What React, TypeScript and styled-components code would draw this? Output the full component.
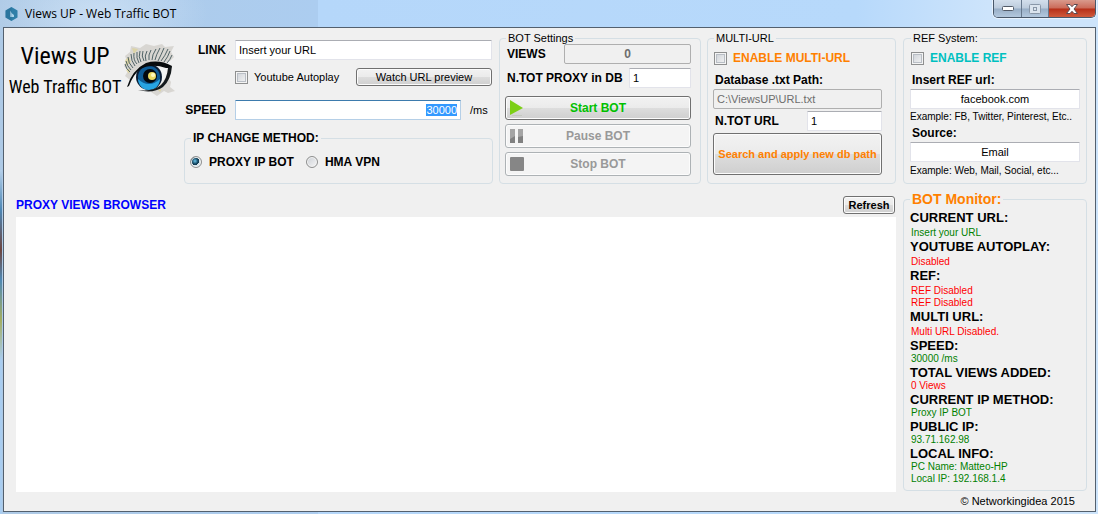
import React, { useEffect, useRef } from "react";
import styled, { createGlobalStyle, css } from "styled-components";

const Global = createGlobalStyle`
  *, *::before, *::after { box-sizing: border-box; }
  body {
    margin: 0;
    font: 11px/14px "Liberation Sans", Arial, sans-serif;
    color: #000;
    background: #b9d6f2;
  }
  button, input { font: inherit; color: inherit; }
`;

const bold = css`
  font-weight: 700;
  font-size: 12px;
`;

const Window = styled.div`
  display: flex;
  flex-direction: column;
  min-height: 100vh;
  padding: 0 2px 2px 3px;
  background:
    linear-gradient(#b5d0ea, #4d87b5 40px, #6d4640 80px, #5089b4 110px, #a3ae62 150px, #a9cdf0 190px) 0 170px / 2px 100% no-repeat,
    radial-gradient(ellipse at 98px 13px, #dcebfa99, #dcebfa00 110px),
    linear-gradient(90deg, #aecae6, #accdf0 29%, #b5d7fa 29%, #b7d9fb 78%, #cde4fb 90%);
`;

const TitleBar = styled.header`
  display: flex;
  justify-content: space-between;
  height: 27px;
`;

const Title = styled.h1`
  display: flex;
  align-items: center;
  gap: 7px;
  margin: 0;
  padding-left: 2px;
  font: 400 12px/24px "Open Sans", "Noto Sans", sans-serif;
`;

const WindowButtons = styled.div`
  display: flex;
  height: 18px;
  border: 1px solid #49586a;
  border-top: 0;
  border-radius: 0 0 5px 5px;
  overflow: hidden;
  box-shadow: 0 0 0 1px #ffffff88;
`;

const WindowButton = styled.button<{ $close?: boolean }>`
  display: grid;
  place-items: center;
  width: ${(p) => (p.$close ? 47 : 27)}px;
  padding: 0;
  border: 0;
  border-left: ${(p) => (p.$close ? "1px solid #4a2020" : "0")};
  background: ${(p) =>
    p.$close
      ? "linear-gradient(#d99a8c, #cb6a58 48%, #b62f18 52%, #cf5a3c)"
      : "linear-gradient(#d3dfec, #bccbdc 48%, #98aec6 52%, #b3c8de)"};
  & + & { border-left: 1px solid #66788d; }
`;

const Client = styled.main`
  display: flex;
  flex: 1;
  gap: 7px;
  padding: 4px 8px 0 4px;
  border: 1px solid #53606e;
  background: #f0f0f0;
`;

const MainColumn = styled.div`
  display: flex;
  flex: 1;
  flex-direction: column;
  min-width: 0;
`;

const Sidebar = styled.aside`
  display: flex;
  flex: 0 0 184px;
  flex-direction: column;
`;

const TopRow = styled.div`
  display: flex;
  gap: 6px;
  height: 152px;
`;

const Brand = styled.div`
  display: flex;
  flex: 0 0 170px;
  align-items: flex-start;
  justify-content: space-between;
  padding-top: 8px;
`;

const BrandText = styled.div`
  flex: 0 0 114px;
  font-family: "Liberation Sans Narrow", "Roboto Condensed", sans-serif;
  text-align: center;
  white-space: nowrap;
`;

const BrandName = styled.div`
  font-size: 24px;
  line-height: 32px;
`;

const BrandTagline = styled.div`
  font-size: 18px;
  line-height: 30px;
`;

const UrlForm = styled.div`
  display: flex;
  flex: 1;
  flex-direction: column;
  padding-top: 8px;
`;

const FormRow = styled.div<{ $gap: number }>`
  display: flex;
  align-items: center;
  min-height: 20px;
  margin-bottom: ${(p) => p.$gap}px;
  padding-right: 1px;
`;

const FormLabel = styled.label`
  ${bold}
  flex: 0 0 51px;
  padding-right: 9px;
  text-align: right;
`;

const Unit = styled.span`
  flex: 0 0 31px;
  padding-left: 9px;
`;

const Group = styled.fieldset<{ $width?: number; $right?: number }>`
  display: block;
  ${(p) => p.$width && `flex: 0 0 ${p.$width}px;`}
  min-width: 0;
  margin: 0;
  padding: 0 ${(p) => p.$right || 8}px 5px 5px;
  border: 1px solid #d5dfe5;
  border-radius: 4px;
`;

const Legend = styled.legend<{ $strong?: boolean }>`
  margin-left: 1px;
  padding: 0 2px;
  line-height: 12px;
  ${(p) => p.$strong && bold}
`;

const TextBox = styled.input<{ $align?: string; $active?: boolean }>`
  flex: 1;
  width: 100%;
  min-width: 0;
  height: 20px;
  padding: 0 3px;
  border: 1px solid ${(p) => (p.$active ? "#b5cfe7" : "#e2e3ea")};
  border-top-color: ${(p) => (p.$active ? "#3d7bad" : "#abadb3")};
  border-radius: 1px;
  background: #fff;
  text-align: ${(p) => p.$align || "left"};
  outline: 0;
  &::selection {
    background: #3399ff;
    color: #fff;
  }
  &:disabled {
    border: 1px solid #afafaf;
    border-radius: 2px;
    background: #f0f0f0;
    color: #6d6d6d;
  }
`;

const Button = styled.button`
  display: flex;
  align-items: center;
  justify-content: center;
  padding: 0;
  border: 1px solid #707070;
  border-radius: 3px;
  background: linear-gradient(#f2f2f2, #ebebeb 49%, #dddddd 51%, #cfcfcf);
  box-shadow: inset 0 0 0 1px #fcfcfc;
  white-space: nowrap;
  &:disabled {
    border-color: #adb2b5;
    background: #f4f4f4;
    color: #999;
  }
`;

const PreviewButton = styled(Button)`
  width: 136px;
  height: 18px;
  margin-left: auto;
`;

const ActionButton = styled(Button)`
  ${bold}
  position: relative;
  width: 100%;
  height: 24px;
  margin-bottom: 4px;
  color: #00c000;
  svg {
    position: absolute;
    left: 3px;
    top: 3px;
  }
`;

const Counter = styled.output`
  ${bold}
  flex: 1;
  height: 20px;
  border: 1px solid #afafaf;
  border-radius: 2px;
  line-height: 18px;
  text-align: center;
  color: #6d6d6d;
`;

const SettingsRow = styled.div<{ $gap: number }>`
  display: flex;
  align-items: center;
  margin-bottom: ${(p) => p.$gap}px;
`;

const FieldLabel = styled.label<{ $width?: number; $line?: number }>`
  ${bold}
  display: block;
  ${(p) => p.$width && `flex: 0 0 ${p.$width}px;`}
  padding-left: 2px;
  line-height: ${(p) => p.$line || 17}px;
  white-space: nowrap;
`;

const Toggle = styled.label<{ $color?: string }>`
  ${(p) => p.$color && bold}
  display: flex;
  align-items: center;
  gap: 6px;
  color: ${(p) => p.$color || "inherit"};
  white-space: nowrap;
`;

const ToggleRow = styled.div`
  display: flex;
  height: 28px;
  padding-left: 1px;
`;

const CheckBox = styled.input.attrs({ type: "checkbox" })`
  appearance: none;
  width: 13px;
  height: 13px;
  margin: 0;
  border: 1px solid #8e8f8f;
  background: linear-gradient(135deg, #cbcfd5, #f6f6f6);
  box-shadow: inset 0 0 0 1px #f4f4f4, inset 0 0 0 2px #b9bec5;
`;

const Radio = styled.input.attrs({ type: "radio" })`
  appearance: none;
  width: 12px;
  height: 12px;
  margin: 0;
  border: 1px solid #8e8f8f;
  border-radius: 50%;
  background: linear-gradient(135deg, #cbcfd5, #f6f6f6);
  box-shadow: inset 0 0 0 1px #f4f4f4;
  &:checked {
    background: radial-gradient(circle at 4px 4px, #6cc5ea, #12445f 3px, #12394f 4px, #d5e3ea 4px);
  }
`;

const RadioRow = styled.div`
  display: flex;
  gap: 12px;
  padding: 11px 0 9px;
`;

const RadioLabel = styled.label`
  ${bold}
  display: flex;
  align-items: center;
  gap: 7px;
`;

const SearchButton = styled(Button)`
  width: 100%;
  height: 42px;
  color: #ff8000;
  font-weight: 700;
`;

const Hint = styled.p<{ $line: number }>`
  margin: 0;
  font-size: 10px;
  line-height: ${(p) => p.$line}px;
  white-space: nowrap;
`;

const ReferrerGroup = styled(Group)`
  padding: 0 6px 4px;
`;

const BrowserBar = styled.div`
  display: flex;
  align-items: center;
  justify-content: space-between;
  height: 33px;
  padding: 9px 1px 0 8px;
`;

const BrowserTitle = styled.h2`
  ${bold}
  margin: 0;
  color: #0000ff;
`;

const RefreshButton = styled(Button)`
  width: 52px;
  height: 18px;
  font-weight: 700;
`;

const Browser = styled.section`
  flex: 1;
  margin: 0 0 19px 8px;
  background: #fff;
`;

const Monitor = styled(Group)`
  flex: 1;
  margin-top: 7px;
  padding: 3px 0 3px 6px;
`;

const MonitorLegend = styled.legend`
  padding: 0 2px;
  font-size: 14px;
  font-weight: 700;
  line-height: 16px;
  color: #ff8000;
`;

const MonitorHeading = styled.h3`
  margin: 0;
  font-size: 13px;
  font-weight: 700;
  line-height: 15px;
  white-space: nowrap;
`;

const MonitorList = styled.div<{ $spaced?: boolean }>`
  padding-top: ${(p) => (p.$spaced ? 2 : 0)}px;
`;

const MonitorValue = styled.p<{ $ok?: boolean }>`
  margin: 0;
  padding-left: 1px;
  font-size: 10px;
  line-height: 12px;
  color: ${(p) => (p.$ok ? "#008000" : "#ff0000")};
`;

const Footer = styled.footer`
  height: 20px;
  padding-right: 12px;
  line-height: 20px;
  text-align: right;
`;

const status = [
  { title: "CURRENT URL:", values: ["Insert your URL"], ok: true, spaced: true },
  { title: "YOUTUBE AUTOPLAY:", values: ["Disabled"], spaced: true },
  { title: "REF:", values: ["REF Disabled", "REF Disabled"], spaced: true },
  { title: "MULTI URL:", values: ["Multi URL Disabled."], spaced: true },
  { title: "SPEED:", values: ["30000 /ms"], ok: true },
  { title: "TOTAL VIEWS ADDED:", values: ["0 Views"] },
  { title: "CURRENT IP METHOD:", values: ["Proxy IP BOT"], ok: true },
  { title: "PUBLIC IP:", values: ["93.71.162.98"], ok: true },
  { title: "LOCAL INFO:", values: ["PC Name: Matteo-HP", "Local IP: 192.168.1.4"], ok: true },
];

const AppIcon = () => (
  <svg width="13" height="16" viewBox="0 0 13 16" aria-hidden="true">
    <path d="M6.5 1 L12.5 4.5 V11.5 L6.5 15 L.5 11.5 V4.5Z" fill="#2f7fa8" />
    <path d="M5 4.5 V11 H9 V9 L7 7.5Z" fill="#a9d3ea" />
    <path d="M6.5 1 L.5 4.5 V11.5 L6.5 15Z" fill="#205f88" opacity=".3" />
  </svg>
);

const lashes = [
  "M6 28Q2 25 1 20", "M7 26Q3 22 2 17", "M9 24Q4 19 4 13", "M11 22Q7 17 7 10",
  "M13 20Q9 16 10 9", "M15 19Q12 14 13 8", "M17 18Q14 13 16 7", "M20 17Q17 12 19 7",
  "M22 17Q20 12 23 7", "M25 16Q24 11 27 6", "M28 16Q28 11 32 5", "M31 16Q32 11 36 4",
  "M34 17Q37 11 40 4", "M37 17Q41 12 44 5", "M40 18Q44 13 46 7", "M43 19Q46 16 48 11",
];

const Eye = () => (
  <svg width="54" height="62" viewBox="0 0 54 62" aria-hidden="true">
    <g transform="translate(0 4)">
      <path
        d="M7 2L16 4L22 0L30 2L38 0L41 3L50 2L47 8L50 13L46 17L40 19L10 28L6 36L1 32L4 27L0 22L3 17L1 12L6 8Z"
        fill="#d2d0ca"
        opacity=".8"
      />
      <path d="M29 45L37 40L43 32L47 38L46 43L51 47L44 49L40 47L33 52L27 48Z" fill="#d2d0ca" opacity=".8" />
      <path d="M1 16l4-3 2 5-5 4Z M8 4l6 1-4 5Z M2 26l4-2-1 6Z M34 46l4-1-2 3Z" fill="#e0d28a" opacity=".6" />
      <path d="M10 36 Q17 22 42 25 Q41 39 31 44 Q17 49 10 36Z" fill="#f1f4f4" />
      <circle cx="25" cy="33" r="13" fill="#0a1c33" />
      <circle cx="25" cy="33" r="11" fill="#0e5c96" />
      <path d="M14 35 A11 11 0 0 0 36 35 Q31 40 25 40 Q19 40 14 35Z" fill="#27a4e2" />
      <circle cx="26" cy="32" r="7" fill="#04090f" />
      <circle cx="28" cy="32" r="4" fill="#e9da62" />
      <circle cx="29" cy="31" r="2" fill="#fffac0" />
      <path d="M3 43 Q8 26 22 19 Q35 15 48 22 L47 24 L42 24 Q28 19 16 25 Q9 31 5 42Z" fill="#080b0d" />
      <path d="M48 22 Q47 36 39 43 Q29 50 14 46 Q29 48 37 41 Q43 35 44 24Z" fill="#14191c" />
      <g fill="none" stroke="#2c4449" strokeWidth=".8">
        {lashes.map((d) => (
          <path key={d} d={d} />
        ))}
      </g>
    </g>
  </svg>
);

const PlayIcon = () => (
  <svg width="16" height="16" viewBox="0 0 16 16" aria-hidden="true">
    <path d="M1 0 L14 8 L1 15Z" fill="#7ccf16" />
    <path d="M3 15.5H13" stroke="#c4c8c0" />
  </svg>
);

const PauseIcon = () => (
  <svg width="16" height="16" viewBox="0 0 16 16" aria-hidden="true">
    <path d="M1 1H6V15H1Z M9 1H14V15H9Z" fill="#a4a4a4" />
    <path d="M1 11L6 8V15H1Z M9 9L14 8V15H9Z" fill="#808080" />
  </svg>
);

const StopIcon = () => (
  <svg width="16" height="16" viewBox="0 0 16 16" aria-hidden="true">
    <rect x="1" y="1" width="14" height="14" rx="1" fill="#868686" />
  </svg>
);

export default function App() {
  const speed = useRef<HTMLInputElement>(null);

  useEffect(() => {
    speed.current?.focus();
    speed.current?.select();
  }, []);

  return (
    <>
      <Global />
      <Window>
        <TitleBar>
          <Title>
            <AppIcon />
            Views UP - Web Traffic BOT
          </Title>
          <WindowButtons>
            <WindowButton aria-label="Minimize">
              <svg width="12" height="6" viewBox="0 0 12 6">
                <rect x=".5" y=".5" width="11" height="4" rx="1" fill="#fff" stroke="#535b68" />
              </svg>
            </WindowButton>
            <WindowButton aria-label="Maximize" disabled>
              <svg width="12" height="10" viewBox="0 0 12 10" fill="#dbe4ee" stroke="#8997a8">
                <rect x=".5" y=".5" width="11" height="9" rx="1" />
                <rect x="4.500" y="3.500" width="3" height="3" />
              </svg>
            </WindowButton>
            <WindowButton $close aria-label="Close">
              <svg width="12" height="10" viewBox="0 0 12 10">
                <path
                  d="M.5 .5H4L6 2.700 8 .5H11.500L8 5 11.500 9.500H8L6 7.300 4 9.500H.5L4 5Z"
                  fill="#fff"
                  stroke="#5b4a50"
                />
              </svg>
            </WindowButton>
          </WindowButtons>
        </TitleBar>
        <Client>
          <MainColumn>
            <TopRow>
              <Brand>
                <BrandText>
                  <BrandName>Views UP</BrandName>
                  <BrandTagline>Web Traffic BOT</BrandTagline>
                </BrandText>
                <Eye />
              </Brand>
              <UrlForm>
                <FormRow $gap={7}>
                  <FormLabel htmlFor="link">LINK</FormLabel>
                  <TextBox id="link" defaultValue="Insert your URL" />
                </FormRow>
                <FormRow $gap={13}>
                  <FormLabel as="span" />
                  <Toggle>
                    <CheckBox />
                    Youtube Autoplay
                  </Toggle>
                  <PreviewButton>Watch URL preview</PreviewButton>
                </FormRow>
                <FormRow $gap={12}>
                  <FormLabel htmlFor="speed">SPEED</FormLabel>
                  <TextBox id="speed" ref={speed} $active $align="right" defaultValue="30000" />
                  <Unit>/ms</Unit>
                </FormRow>
                <Group>
                  <Legend $strong>IP CHANGE METHOD:</Legend>
                  <RadioRow>
                    <RadioLabel>
                      <Radio name="method" defaultChecked />
                      PROXY IP BOT
                    </RadioLabel>
                    <RadioLabel>
                      <Radio name="method" />
                      HMA VPN
                    </RadioLabel>
                  </RadioRow>
                </Group>
              </UrlForm>
              <Group $width={202} $right={9}>
                <Legend>BOT Settings</Legend>
                <SettingsRow $gap={4}>
                  <FieldLabel as="span" $width={59}>VIEWS</FieldLabel>
                  <Counter>0</Counter>
                </SettingsRow>
                <SettingsRow $gap={8}>
                  <FieldLabel htmlFor="proxies" $width={124}>N.TOT PROXY in DB</FieldLabel>
                  <TextBox id="proxies" defaultValue="1" />
                </SettingsRow>
                <ActionButton>
                  <PlayIcon />
                  Start BOT
                </ActionButton>
                <ActionButton disabled>
                  <PauseIcon />
                  Pause BOT
                </ActionButton>
                <ActionButton disabled>
                  <StopIcon />
                  Stop BOT
                </ActionButton>
              </Group>
              <Group $width={189} $right={13}>
                <Legend>MULTI-URL</Legend>
                <ToggleRow>
                  <Toggle $color="#ff8000">
                    <CheckBox />
                    ENABLE MULTI-URL
                  </Toggle>
                </ToggleRow>
                <FieldLabel htmlFor="path">Database .txt Path:</FieldLabel>
                <SettingsRow $gap={2}>
                  <TextBox id="path" disabled defaultValue="C:\ViewsUP\URL.txt" />
                </SettingsRow>
                <SettingsRow $gap={2}>
                  <FieldLabel htmlFor="urls" $width={94}>N.TOT URL</FieldLabel>
                  <TextBox id="urls" defaultValue="1" />
                </SettingsRow>
                <SearchButton>Search and apply new db path</SearchButton>
              </Group>
            </TopRow>
            <BrowserBar>
              <BrowserTitle>PROXY VIEWS BROWSER</BrowserTitle>
              <RefreshButton>Refresh</RefreshButton>
            </BrowserBar>
            <Browser aria-label="Proxy views browser" />
          </MainColumn>
          <Sidebar>
            <ReferrerGroup>
              <Legend>REF System:</Legend>
              <ToggleRow>
                <Toggle $color="#00c0c0">
                  <CheckBox />
                  ENABLE REF
                </Toggle>
              </ToggleRow>
              <FieldLabel htmlFor="ref">Insert REF url:</FieldLabel>
              <SettingsRow $gap={0}>
                <TextBox id="ref" $align="center" defaultValue="facebook.com" />
              </SettingsRow>
              <Hint $line={15}>Example: FB, Twitter, Pinterest, Etc..</Hint>
              <FieldLabel htmlFor="source" $line={18}>Source:</FieldLabel>
              <SettingsRow $gap={0}>
                <TextBox id="source" $align="center" defaultValue="Email" />
              </SettingsRow>
              <Hint $line={17}>Example: Web, Mail, Social, etc...</Hint>
            </ReferrerGroup>
            <Monitor>
              <MonitorLegend>BOT Monitor:</MonitorLegend>
              {status.map((s) => (
                <React.Fragment key={s.title}>
                  <MonitorHeading>{s.title}</MonitorHeading>
                  <MonitorList $spaced={s.spaced}>
                    {s.values.map((v, i) => (
                      <MonitorValue key={i} $ok={s.ok}>{v}</MonitorValue>
                    ))}
                  </MonitorList>
                </React.Fragment>
              ))}
            </Monitor>
            <Footer>© Networkingidea 2015</Footer>
          </Sidebar>
        </Client>
      </Window>
    </>
  );
}
